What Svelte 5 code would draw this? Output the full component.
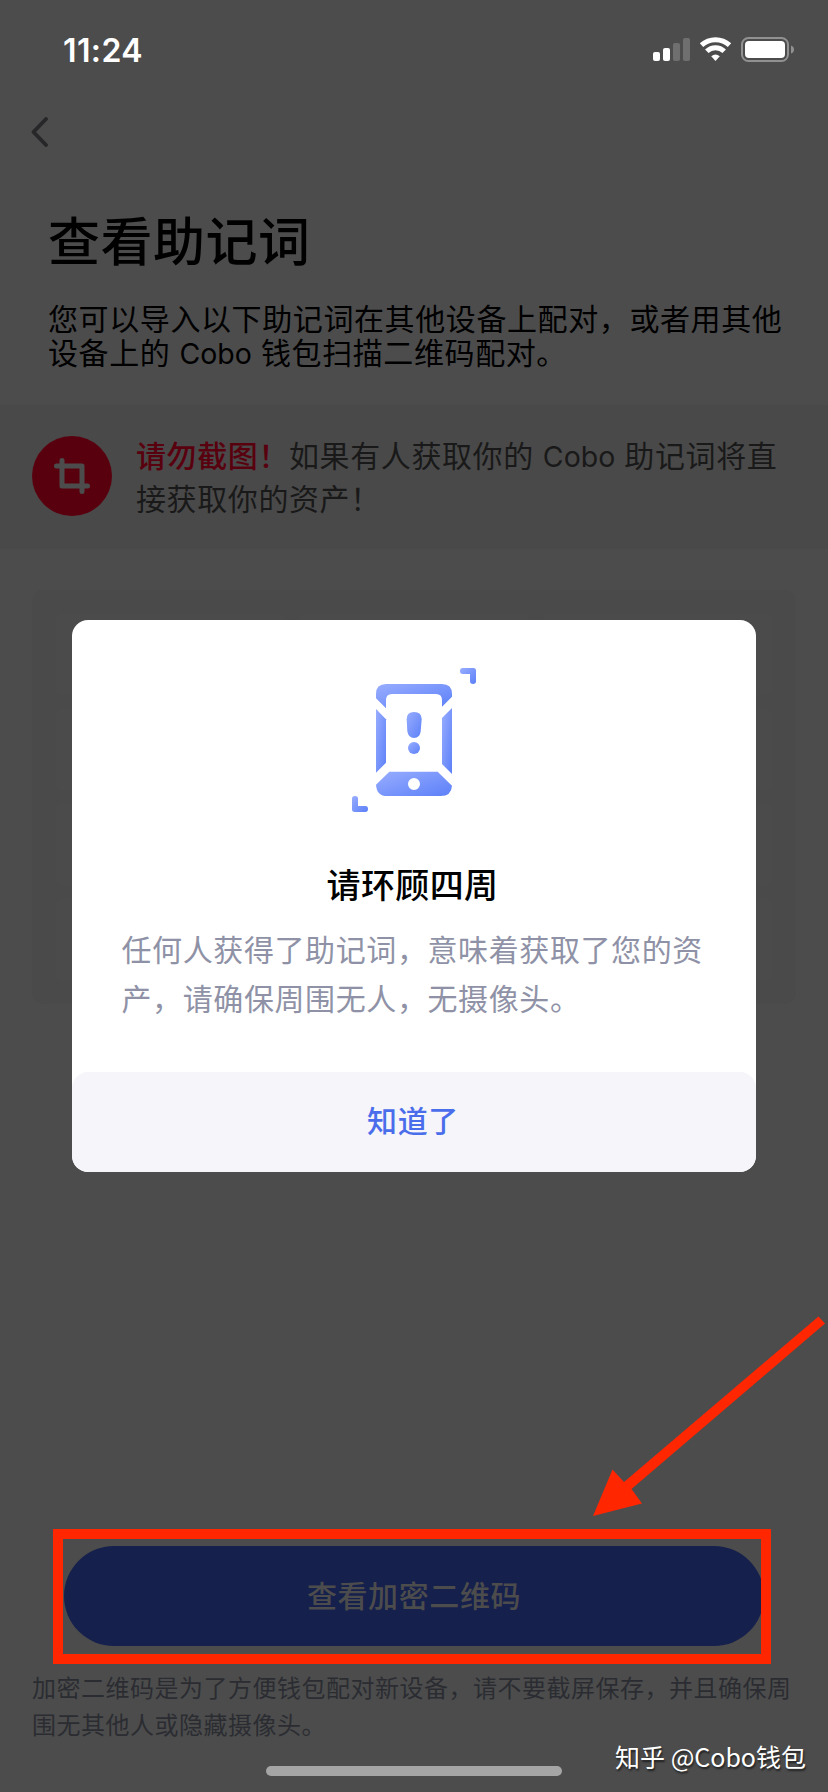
<script>
	const wordRows = [1, 2, 3, 4];
	const wordCols = [1, 2, 3];

	let showDialog = true;

	function closeDialog() {
		showDialog = false;
	}
</script>

<div class="screen">
	<div class="page">
		<button class="back" aria-label="返回">
			<svg width="17" height="30" viewBox="0 0 17 30">
				<path d="M15 2 L2.500 15 L15 28" />
			</svg>
		</button>

		<h1>查看助记词</h1>
		<p class="intro">
			您可以导入以下助记词在其他设备上配对，或者用其他<br />设备上的 <span class="latin">Cobo</span> 钱包扫描二维码配对。
		</p>

		<div class="warning">
			<div class="warning-icon">
				<svg width="36" height="36" viewBox="0 0 36 36">
					<path d="M2.500 8 H28 V33.500 M8 2.500 V28 H33.500" />
				</svg>
			</div>
			<p>
				<strong>请勿截图！</strong>如果有人获取你的 <span class="latin">Cobo</span> 助记词将直<br />接获取你的资产！
			</p>
		</div>

		<div class="words">
			{#each wordRows as row}
				{#each wordCols as col}
					<span class="word"></span>
				{/each}
			{/each}
		</div>

		<button class="primary">查看加密二维码</button>
		<p class="note">加密二维码是为了方便钱包配对新设备，请不要截屏保存，并且确保周<br />围无其他人或隐藏摄像头。</p>
	</div>

	<div class="status">
		<span class="time">11:24</span>
		<svg width="143" height="28" viewBox="0 0 143 28" fill="#fff">
			<rect x="0" y="16" width="7" height="9" rx="2" />
			<rect x="10" y="12" width="7" height="13" rx="2" />
			<rect x="20" y="7" width="7" height="18" rx="2" opacity=".2" />
			<rect x="30" y="2" width="7" height="23" rx="2" opacity=".2" />
			<g fill="none" stroke="#fff" stroke-width="5">
				<path d="M48.5 9.2 A20.5 20.5 0 0 1 76.5 9.2" />
				<path d="M53.8 15.2 A12.5 12.5 0 0 1 71.2 15.2" />
			</g>
			<path d="M62.5 25 L58.2 20.3 Q62.5 16.8 66.8 20.3 Z" />
			<rect x="89" y="2" width="46" height="23" rx="6.5" fill="none" stroke="#919191" stroke-width="2" />
			<rect x="92" y="5" width="40" height="17" rx="4" />
			<path d="M138 9.5 Q141 10.5 141 13.5 Q141 16.5 138 17.5 Z" fill="#919191" />
		</svg>
	</div>

	{#if showDialog}
		<div class="dialog">
			<svg class="phone" width="124" height="144" viewBox="96 84 372 432">
				<defs>
					<linearGradient id="blue" x1="0" y1="0" x2="1" y2="1">
						<stop offset="0" stop-color="#98adff" />
						<stop offset="1" stop-color="#5c80f8" />
					</linearGradient>
				</defs>
				<g fill="url(#blue)">
					<path d="M428 84 H460 Q468 84 468 92 V124 Q468 132 459 132 Q450 132 450 124 V102 H428 Q420 102 420 93 Q420 84 428 84 Z" />
					<path d="M105 468 Q114 468 114 476 V498 H136 Q144 498 144 507 Q144 516 136 516 H104 Q96 516 96 508 V476 Q96 468 105 468 Z" />
					<path d="M168 175 V162 Q168 132 198 132 H366 Q396 132 396 162 V170 L366 200 V180 Q366 162 348 162 H216 Q198 162 198 180 V205 Z" />
					<path d="M168 207 L198 238 V368 L168 398 Z" />
					<path d="M396 204 V402 L366 372 V234 Z" />
					<path
						fill-rule="evenodd"
						d="M208 395 H353 L396 437 Q394 468 362 468 H202 Q170 468 168 434 Z M300 432 A18 18 0 1 0 264 432 A18 18 0 1 0 300 432 Z"
					/>
					<path d="M260 238 Q260 216 282 216 Q305 216 305 238 L302 274 Q300 294 282 294 Q265 294 262 274 Z" />
					<circle cx="282" cy="324" r="18" />
				</g>
			</svg>
			<h2>请环顾四周</h2>
			<p>任何人获得了助记词，意味着获取了您的资<br />产，请确保周围无人，无摄像头。</p>
			<button class="confirm" on:click={closeDialog}>知道了</button>
		</div>
	{/if}

	<!-- annotations on top of the screen -->
	<div class="highlight"></div>
	<svg class="arrow" width="240" height="220" viewBox="0 0 240 220" fill="#ff2600">
		<path d="M226.5 16.5 L233 23.5 L39.5 189 L50 203.5 L1 216 L20.5 169.5 L32 182 Z" />
	</svg>
	<div class="home-bar"></div>
	<span class="watermark">知乎 @Cobo钱包</span>
</div>

<style>
	:global(body) {
		background: #4c4c4c;
	}

	.screen {
		position: relative;
		width: 828px;
		height: 1792px;
		overflow: hidden;
		font-family: Inter, 'Noto Sans CJK SC', sans-serif;
		font-size: 30px;
		letter-spacing: 0.6px;
		background: #4c4c4c;
	}

	p,
	h1,
	h2 {
		margin: 0;
		white-space: nowrap;
	}

	button {
		border: none;
		padding: 0;
		font: inherit;
		letter-spacing: inherit;
		cursor: pointer;
	}

	.latin {
		font-size: 28.5px;
		letter-spacing: 0;
	}

	.page {
		display: flex;
		flex-direction: column;
		height: 100%;
		padding-top: 117px;
		box-sizing: border-box;
	}

	.back {
		display: flex;
		margin-left: 31px;
		width: 17px;
		height: 30px;
		background: none;
	}

	.back path {
		fill: none;
		stroke: #27272a;
		stroke-width: 3.8;
		stroke-linecap: round;
		stroke-linejoin: round;
	}

	h1 {
		margin: 66px 0 0 48px;
		font-size: 52px;
		font-weight: 500;
		line-height: 60px;
		letter-spacing: 0.5px;
		color: #000;
	}

	.intro {
		margin: 29px 0 0 48px;
		line-height: 34px;
		color: #000;
	}

	.warning {
		display: flex;
		margin-top: 34px;
		height: 144px;
		padding: 31px 32px 0;
		box-sizing: border-box;
		background: #494949;
		color: #191919;
		line-height: 43px;
	}

	.warning p {
		margin: -1px 0 0 24px;
	}

	.warning strong {
		font-weight: 500;
		color: #59000f;
	}

	.warning-icon {
		display: flex;
		align-items: center;
		justify-content: center;
		width: 80px;
		height: 80px;
		border-radius: 50%;
		background: #59000f;
	}

	.warning-icon path {
		fill: none;
		stroke: #4c4c4c;
		stroke-width: 5;
		stroke-linecap: round;
		stroke-linejoin: round;
	}

	.words {
		display: grid;
		grid-template-columns: repeat(3, 1fr);
		grid-template-rows: repeat(4, 1fr);
		gap: 14px;
		margin: 41px 32px 0;
		padding: 24px;
		height: 414px;
		box-sizing: border-box;
		border-radius: 12px;
		background: #4a4a4a;
	}

	.word {
		border-radius: 4px;
		background: #4b4b4b;
	}

	.primary {
		margin: auto 64px 0;
		padding-bottom: 5px;
		height: 100px;
		flex-shrink: 0;
		border-radius: 50px;
		background: #16204c;
		color: #4c4c4c;
		font-weight: 500;
	}

	.note {
		margin: 24px 0 48px 32px;
		font-size: 24px;
		line-height: 37px;
		letter-spacing: 0.5px;
		color: #2b2c32;
	}

	.status {
		position: absolute;
		top: 36px;
		left: 63px;
		right: 32px;
		display: flex;
		justify-content: space-between;
		height: 28px;
		line-height: 29px;
	}

	.time {
		font-size: 32px;
		font-weight: 600;
		letter-spacing: 0.4px;
		color: #fff;
	}

	.dialog {
		position: absolute;
		top: 620px;
		left: 72px;
		width: 684px;
		height: 552px;
		display: flex;
		flex-direction: column;
		align-items: center;
		border-radius: 16px;
		overflow: hidden;
		background: #fff;
	}

	.phone {
		margin-top: 48px;
		flex-shrink: 0;
	}

	h2 {
		margin: 50px 3px 0 0;
		font-size: 34px;
		font-weight: 500;
		line-height: 48px;
		letter-spacing: 0.4px;
		color: #000;
	}

	.dialog p {
		margin: 16px 0 0 -1px;
		width: 584px;
		line-height: 49px;
		color: #8f92a6;
	}

	.confirm {
		margin-top: auto;
		padding: 0 2px 6px 0;
		width: 100%;
		height: 100px;
		border-radius: 16px;
		background: #f5f5fa;
		color: #4a6deb;
		font-weight: 500;
	}

	.highlight {
		position: absolute;
		top: 1529px;
		left: 53px;
		width: 718px;
		height: 135px;
		box-sizing: border-box;
		border: 10px solid #ff2600;
	}

	.arrow {
		position: absolute;
		top: 1300px;
		left: 592px;
	}

	.home-bar {
		position: absolute;
		top: 1766px;
		left: 266px;
		width: 296px;
		height: 10px;
		border-radius: 5px;
		background: #a5a5a5;
	}

	.watermark {
		position: absolute;
		right: 22px;
		bottom: 18px;
		font-family: 'Noto Sans CJK SC', sans-serif;
		font-size: 25px;
		line-height: 36px;
		letter-spacing: 0;
		color: #fff;
		text-shadow: 1px 2px 2px rgba(0, 0, 0, 0.6);
		white-space: nowrap;
	}
</style>
